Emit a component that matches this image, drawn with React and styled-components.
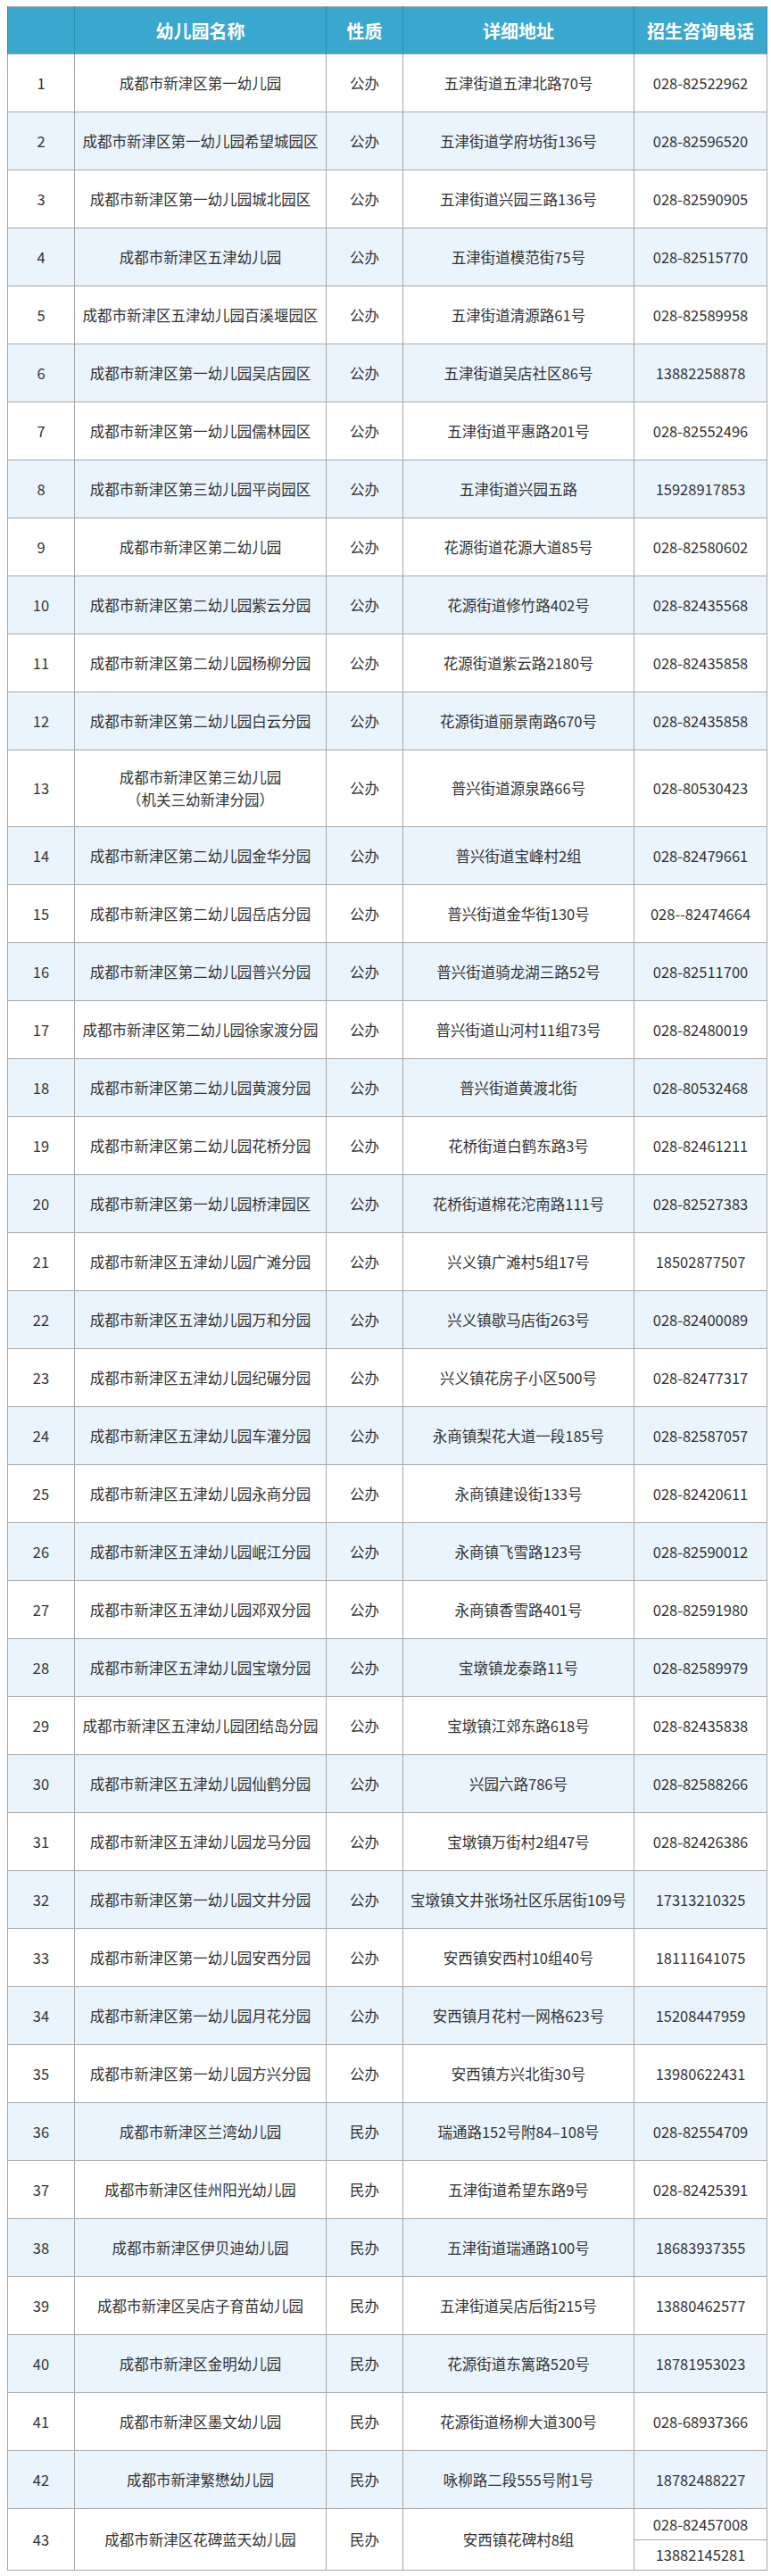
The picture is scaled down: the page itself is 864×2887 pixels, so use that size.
import styled, { createGlobalStyle } from 'styled-components';

const rows = [
  ['1', '成都市新津区第一幼儿园', '公办', '五津街道五津北路70号', '028-82522962'],
  ['2', '成都市新津区第一幼儿园希望城园区', '公办', '五津街道学府坊街136号', '028-82596520'],
  ['3', '成都市新津区第一幼儿园城北园区', '公办', '五津街道兴园三路136号', '028-82590905'],
  ['4', '成都市新津区五津幼儿园', '公办', '五津街道模范街75号', '028-82515770'],
  ['5', '成都市新津区五津幼儿园百溪堰园区', '公办', '五津街道清源路61号', '028-82589958'],
  ['6', '成都市新津区第一幼儿园吴店园区', '公办', '五津街道吴店社区86号', '13882258878'],
  ['7', '成都市新津区第一幼儿园儒林园区', '公办', '五津街道平惠路201号', '028-82552496'],
  ['8', '成都市新津区第三幼儿园平岗园区', '公办', '五津街道兴园五路', '15928917853'],
  ['9', '成都市新津区第二幼儿园', '公办', '花源街道花源大道85号', '028-82580602'],
  ['10', '成都市新津区第二幼儿园紫云分园', '公办', '花源街道修竹路402号', '028-82435568'],
  ['11', '成都市新津区第二幼儿园杨柳分园', '公办', '花源街道紫云路2180号', '028-82435858'],
  ['12', '成都市新津区第二幼儿园白云分园', '公办', '花源街道丽景南路670号', '028-82435858'],
  ['13', ['成都市新津区第三幼儿园', '（机关三幼新津分园）'], '公办', '普兴街道源泉路66号', '028-80530423'],
  ['14', '成都市新津区第二幼儿园金华分园', '公办', '普兴街道宝峰村2组', '028-82479661'],
  ['15', '成都市新津区第二幼儿园岳店分园', '公办', '普兴街道金华街130号', '028--82474664'],
  ['16', '成都市新津区第二幼儿园普兴分园', '公办', '普兴街道骑龙湖三路52号', '028-82511700'],
  ['17', '成都市新津区第二幼儿园徐家渡分园', '公办', '普兴街道山河村11组73号', '028-82480019'],
  ['18', '成都市新津区第二幼儿园黄渡分园', '公办', '普兴街道黄渡北街', '028-80532468'],
  ['19', '成都市新津区第二幼儿园花桥分园', '公办', '花桥街道白鹤东路3号', '028-82461211'],
  ['20', '成都市新津区第一幼儿园桥津园区', '公办', '花桥街道棉花沱南路111号', '028-82527383'],
  ['21', '成都市新津区五津幼儿园广滩分园', '公办', '兴义镇广滩村5组17号', '18502877507'],
  ['22', '成都市新津区五津幼儿园万和分园', '公办', '兴义镇歇马店街263号', '028-82400089'],
  ['23', '成都市新津区五津幼儿园纪碾分园', '公办', '兴义镇花房子小区500号', '028-82477317'],
  ['24', '成都市新津区五津幼儿园车灌分园', '公办', '永商镇梨花大道一段185号', '028-82587057'],
  ['25', '成都市新津区五津幼儿园永商分园', '公办', '永商镇建设街133号', '028-82420611'],
  ['26', '成都市新津区五津幼儿园岷江分园', '公办', '永商镇飞雪路123号', '028-82590012'],
  ['27', '成都市新津区五津幼儿园邓双分园', '公办', '永商镇香雪路401号', '028-82591980'],
  ['28', '成都市新津区五津幼儿园宝墩分园', '公办', '宝墩镇龙泰路11号', '028-82589979'],
  ['29', '成都市新津区五津幼儿园团结岛分园', '公办', '宝墩镇江郊东路618号', '028-82435838'],
  ['30', '成都市新津区五津幼儿园仙鹤分园', '公办', '兴园六路786号', '028-82588266'],
  ['31', '成都市新津区五津幼儿园龙马分园', '公办', '宝墩镇万街村2组47号', '028-82426386'],
  ['32', '成都市新津区第一幼儿园文井分园', '公办', '宝墩镇文井张场社区乐居街109号', '17313210325'],
  ['33', '成都市新津区第一幼儿园安西分园', '公办', '安西镇安西村10组40号', '18111641075'],
  ['34', '成都市新津区第一幼儿园月花分园', '公办', '安西镇月花村一网格623号', '15208447959'],
  ['35', '成都市新津区第一幼儿园方兴分园', '公办', '安西镇方兴北街30号', '13980622431'],
  ['36', '成都市新津区兰湾幼儿园', '民办', '瑞通路152号附84–108号', '028-82554709'],
  ['37', '成都市新津区佳州阳光幼儿园', '民办', '五津街道希望东路9号', '028-82425391'],
  ['38', '成都市新津区伊贝迪幼儿园', '民办', '五津街道瑞通路100号', '18683937355'],
  ['39', '成都市新津区吴店子育苗幼儿园', '民办', '五津街道吴店后街215号', '13880462577'],
  ['40', '成都市新津区金明幼儿园', '民办', '花源街道东篱路520号', '18781953023'],
  ['41', '成都市新津区墨文幼儿园', '民办', '花源街道杨柳大道300号', '028-68937366'],
  ['42', '成都市新津繁懋幼儿园', '民办', '咏柳路二段555号附1号', '18782488227'],
];

const lastRow = ['43', '成都市新津区花碑蓝天幼儿园', '民办', '安西镇花碑村8组', ['028-82457008', '13882145281']];

const GlobalStyle = createGlobalStyle`
  html, body {
    margin: 0;
    padding: 0;
    background: #ffffff;
  }
  body {
    font-family: "Noto Sans CJK SC", "Noto Sans", sans-serif;
    color: #333333;
  }
`;

const Page = styled.div`
  padding: 7px 5px 10px 8px;
`;

const Table = styled.table`
  width: 851px;
  border-collapse: collapse;
  table-layout: fixed;
  border: 1px solid #a7a7a7;
`;

const HeadCell = styled.th`
  height: 52px;
  padding: 0;
  background: #3aa7cf;
  color: #ffffff;
  font-size: 20px;
  font-weight: 700;
  text-align: center;
  vertical-align: middle;
  border-left: 1px solid #2e8fb3;
  border-right: 1px solid #2e8fb3;
`;

const Row = styled.tr`
  background: ${({ $striped }) => ($striped ? '#eaf4fc' : '#ffffff')};
`;

const Cell = styled.td`
  height: ${({ $h }) => $h || 64}px;
  padding: 0 4px;
  border: 1px solid #a7a7a7;
  font-size: 16.5px;
  line-height: 25px;
  text-align: center;
  vertical-align: middle;
  white-space: nowrap;
`;

const Line = styled.div`
  line-height: 25px;
`;

const cols = [75, 282, 86, 259, 149];

export default function App() {
  return (
    <Page>
      <GlobalStyle />
      <Table>
        <colgroup>
          {cols.map((w, i) => (
            <col key={i} style={{ width: w }} />
          ))}
        </colgroup>
        <thead>
          <tr>
            <HeadCell />
            <HeadCell>幼儿园名称</HeadCell>
            <HeadCell>性质</HeadCell>
            <HeadCell>详细地址</HeadCell>
            <HeadCell>招生咨询电话</HeadCell>
          </tr>
        </thead>
        <tbody>
          {rows.map(([no, name, type, addr, phone]) => {
            const multi = Array.isArray(name);
            return (
              <Row key={no} $striped={Number(no) % 2 === 0}>
                <Cell $h={multi ? 85 : 64}>{no}</Cell>
                <Cell>
                  {multi ? name.map((l) => <Line key={l}>{l}</Line>) : name}
                </Cell>
                <Cell>{type}</Cell>
                <Cell>{addr}</Cell>
                <Cell>{phone}</Cell>
              </Row>
            );
          })}
          <Row>
            <Cell rowSpan={2}>{lastRow[0]}</Cell>
            <Cell rowSpan={2}>{lastRow[1]}</Cell>
            <Cell rowSpan={2}>{lastRow[2]}</Cell>
            <Cell rowSpan={2}>{lastRow[3]}</Cell>
            <Cell $h={34}>{lastRow[4][0]}</Cell>
          </Row>
          <Row>
            <Cell $h={33}>{lastRow[4][1]}</Cell>
          </Row>
        </tbody>
      </Table>
    </Page>
  );
}
